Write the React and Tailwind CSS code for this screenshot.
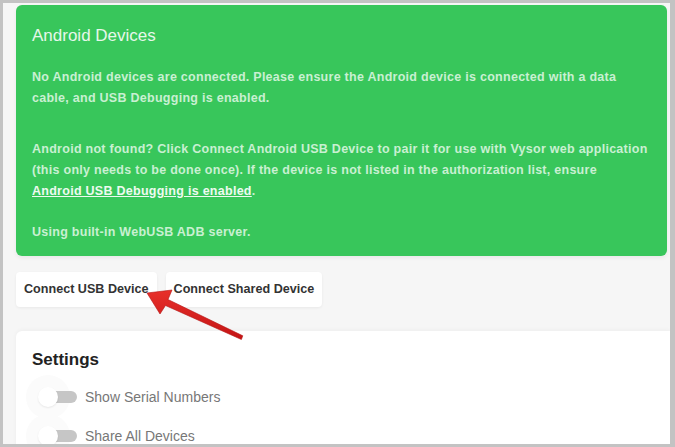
import React from "react";

function Toggle({ label }) {
  return (
    <div className="flex items-center h-[39px]">
      <div className="relative w-[45px] h-[20px] shrink-0">
        <div className="absolute left-[-14px] top-[-12px] w-[44px] h-[44px] rounded-full bg-[#fbfbfb]" />
        <div className="absolute left-[6px] top-[4px] w-[31px] h-[12px] rounded-full bg-[#c6c6c6]" />
        <div className="absolute left-[-2px] top-0 w-[20px] h-[20px] rounded-full bg-white shadow-[0_1px_2px_rgba(0,0,0,0.08)]" />
      </div>
      <span className="text-[14px] text-[#777] leading-none">{label}</span>
    </div>
  );
}

export default function App() {
  return (
    <div
      className="relative w-[675px] h-[447px] overflow-hidden bg-[#c3c3c3] pl-[3px] pt-[3px] pr-[5px] pb-[3px]"
      style={{ fontFamily: '"Liberation Sans", Arial, sans-serif' }}
    >
      <div className="h-full bg-[#f6f6f6] pl-[13px] pt-[2px] flex flex-col overflow-hidden">
        <div className="shrink-0 mr-[3px] rounded-[6px] bg-[#38c65b] px-4 pt-[21px] h-[251px] shadow-[0_2px_4px_rgba(0,0,0,0.06)]">
          <div className="text-[17px] text-[#e6f7ea] leading-[20px]">Android Devices</div>
          <div className="mt-[21px] text-[12.5px] font-bold text-[#c9f0d2] leading-[21px] tracking-[0.27px]">
            <p>
              No Android devices are connected. Please ensure the Android device is connected with a data
              <br />
              cable, and USB Debugging is enabled.
            </p>
            <p className="mt-[30px]">
              Android not found? Click Connect Android USB Device to pair it for use with Vysor web application
              <br />
              (this only needs to be done once). If the device is not listed in the authorization list, ensure
              <br />
              <span className="underline text-[#eefaf0]">Android USB Debugging is enabled</span>.
            </p>
            <p className="mt-[20px]">Using built-in WebUSB ADB server.</p>
          </div>
        </div>

        <div className="shrink-0 flex gap-[9px] mt-[16px]">
          <button className="h-[35px] px-[8px] rounded-[4px] bg-white text-[12.6px] font-bold text-[#333] shadow-[0_1px_3px_rgba(0,0,0,0.06)]">
            Connect USB Device
          </button>
          <button className="h-[35px] px-[8px] rounded-[4px] bg-white text-[12.6px] font-bold text-[#333] shadow-[0_1px_3px_rgba(0,0,0,0.06)]">
            Connect Shared Device
          </button>
        </div>

        <div className="mt-[24px] flex-1 bg-white rounded-tl-[6px] pl-4 pt-[19px] shadow-[0_-1px_4px_rgba(0,0,0,0.04)]">
          <div className="text-[17px] font-bold text-[#222] leading-[20px]">Settings</div>
          <div className="mt-[7px] pl-[8px] flex flex-col">
            <Toggle label="Show Serial Numbers" />
            <Toggle label="Share All Devices" />
          </div>
        </div>
      </div>

      <svg
        className="absolute left-0 top-0 pointer-events-none"
        width="675"
        height="447"
        viewBox="0 0 675 447"
      >
        <defs>
          <linearGradient id="ar" x1="0" y1="0" x2="0" y2="1">
            <stop offset="0" stopColor="#e8302b" />
            <stop offset="1" stopColor="#c41414" />
          </linearGradient>
        </defs>
        <polygon
          points="147,293 172,290 168,299.5 242.8,335.8 241.4,339.5 165.5,305.5 160,314"
          fill="url(#ar)"
          stroke="#b31212"
          strokeWidth="0.6"
          strokeLinejoin="round"
        />
      </svg>
    </div>
  );
}
